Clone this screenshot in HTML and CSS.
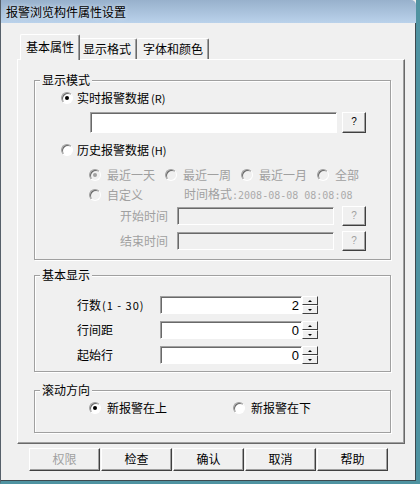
FILE: index.html
```html
<!DOCTYPE html>
<html lang="zh-CN">
<head>
<meta charset="utf-8">
<title>报警浏览构件属性设置</title>
<link rel="stylesheet" href="styles.css">
</head>
<body>
<div class="window">
  <div class="titlebar">报警浏览构件属性设置</div>
  <div class="client">
    <div class="tabs">
      <div class="tab active">基本属性</div>
      <div class="tab t2">显示格式</div>
      <div class="tab t3">字体和颜色</div>
    </div>
    <div class="panel">
      <div class="group g1">
        <div class="legend">显示模式</div>
        <div class="row r1"><span class="radio checked"></span><span class="lbl">实时报警数据<span class="acc">(R)</span></span></div>
        <div class="row r2"><div class="input w-main"></div><div class="qbtn">?</div></div>
        <div class="row r3"><span class="radio"></span><span class="lbl">历史报警数据<span class="acc">(H)</span></span></div>
        <div class="row r4 disabled">
          <span class="opt"><span class="radio checked"></span><span class="lbl">最近一天</span></span>
          <span class="opt o2"><span class="radio"></span><span class="lbl">最近一周</span></span>
          <span class="opt o3"><span class="radio"></span><span class="lbl">最近一月</span></span>
          <span class="opt o4"><span class="radio"></span><span class="lbl">全部</span></span>
        </div>
        <div class="row r5 disabled">
          <span class="opt"><span class="radio"></span><span class="lbl">自定义</span></span>
          <span class="fmt">时间格式<span class="mono">:2008-08-08 08:08:08</span></span>
        </div>
        <div class="row r6 disabled"><span class="tlabel">开始时间</span><div class="input w-time"></div><div class="qbtn q2">?</div></div>
        <div class="row r7 disabled"><span class="tlabel">结束时间</span><div class="input w-time"></div><div class="qbtn q2">?</div></div>
      </div>
      <div class="group g2">
        <div class="legend">基本显示</div>
        <div class="srow s1"><span class="slabel">行数<span class="range">(1 - 30)</span></span><div class="input w-spin">2</div><div class="spin"><span class="up"></span><span class="down"></span></div></div>
        <div class="srow"><span class="slabel">行间距</span><div class="input w-spin">0</div><div class="spin"><span class="up"></span><span class="down"></span></div></div>
        <div class="srow"><span class="slabel">起始行</span><div class="input w-spin">0</div><div class="spin"><span class="up"></span><span class="down"></span></div></div>
      </div>
      <div class="group g3">
        <div class="legend">滚动方向</div>
        <div class="row r8">
          <span class="opt"><span class="radio checked"></span><span class="lbl">新报警在上</span></span>
          <span class="opt o5"><span class="radio"></span><span class="lbl">新报警在下</span></span>
        </div>
      </div>
    </div>
    <div class="buttons">
      <div class="btn dis">权限</div>
      <div class="btn">检查</div>
      <div class="btn">确认</div>
      <div class="btn">取消</div>
      <div class="btn">帮助</div>
    </div>
  </div>
</div>
</body>
</html>
```
FILE: styles.css
```css
* { box-sizing: border-box; }
html, body { margin: 0; padding: 0; }
body {
  width: 420px;
  height: 484px;
  overflow: hidden;
  font-family: "Noto Sans CJK SC", "Noto Sans", sans-serif;
  font-size: 12px;
  color: #000;
  background: #f0f0f0;
}
.window {
  width: 420px;
  height: 484px;
  border-left: 1px solid #56606a;
  border-right: 4px solid #4f93a1;
  border-bottom: 3px solid #4f93a1;
  display: flex;
  flex-direction: column;
}
.titlebar {
  height: 23px;
  flex: none;
  background: linear-gradient(#98b1cc, #bad2eb);
  border-top-right-radius: 5px;
  padding-left: 5px;
  line-height: 24px;
  font-size: 12px;
  color: #000;
  text-shadow: 0 0 4px rgba(255,255,255,0.7);
}
.client {
  flex: 1;
  background: #f0f0f0;
  border-right: 1px solid #3e4a50;
  border-bottom: 1px solid #3e4a50;
  padding: 11px 0 0 16px;
}
.tabs {
  display: flex;
  align-items: flex-end;
  height: 25px;
  margin-left: 3px;
}
.tab {
  height: 21px;
  line-height: 19px;
  border-top: 1px solid #fff;
  border-left: 1px solid #fff;
  border-right: 1px solid #696969;
  box-shadow: inset -1px 0 0 #a0a0a0;
  border-top-left-radius: 2px;
  border-top-right-radius: 2px;
  padding-left: 4px;
  background: #f0f0f0;
}
.tab.active {
  height: 26px;
  margin-bottom: -1px;
  width: 60px;
  padding-left: 5px;
  line-height: 23px;
  position: relative;
  z-index: 1;
}
.tab.t2 { width: 58px; margin-left: -1px; border-left: none; padding-left: 4px; }
.tab.t3 { width: 72px; border-left: none; padding-left: 6px; }
.panel {
  width: 388px;
  height: 385px;
  border: 1px solid;
  border-color: #fff #696969 #696969 #fff;
  box-shadow: inset -1px -1px 0 #a0a0a0;
  padding: 20px 0 0 16px;
}
.group {
  width: 357px;
  border: 1px solid #a0a0a0;
  box-shadow: 1px 1px 0 #fff, inset 1px 1px 0 #fff;
}
.g1 { height: 180px; }
.g2 { height: 97px; margin-top: 15px; }
.g3 { height: 43px; margin-top: 18px; }
.legend {
  margin: -8px 0 0 5px;
  padding: 0 2px;
  width: max-content;
  line-height: 14px;
  background: #f0f0f0;
}
.row {
  display: flex;
  align-items: center;
  height: 16px;
  line-height: 16px;
}
.acc { margin-left: 2px; font-size: 11px; }
.r1 { margin-top: 3px; padding-left: 26px; }
.r1 .lbl, .r3 .lbl { margin-left: 4px; }
.r2 { margin-top: 6px; height: 21px; padding-left: 55px; }
.r3 { margin-top: 9px; padding-left: 26px; }
.r4 { margin-top: 9px; padding-left: 54px; }
.r5 { margin-top: 4px; padding-left: 54px; }
.r6 { margin-top: 3px; height: 20px; }
.r7 { margin-top: 5px; height: 20px; }
.r8 { margin-top: 3px; padding-left: 54px; }
.opt { display: flex; align-items: center; }
.opt .lbl { margin-left: 6px; }
.o2 { margin-left: 10px; }
.o3 { margin-left: 10px; }
.o4 { margin-left: 10px; }
.o5 { margin-left: 66px; }
.fmt { margin-left: 41px; }
.mono { font-family: "DejaVu Sans Mono", "Liberation Mono", monospace; font-size: 10px; color: #aaa; }
.disabled { color: #a0a0a0; }
.radio {
  width: 12px;
  height: 12px;
  flex: none;
  border-radius: 50%;
  border: 1px solid;
  border-color: #a0a0a0 #fff #fff #a0a0a0;
  background: #fff;
  box-shadow: inset 1px 1px 0 #696969;
  position: relative;
}
.radio.checked::after {
  content: "";
  position: absolute;
  left: 3px;
  top: 3px;
  width: 4px;
  height: 4px;
  border-radius: 50%;
  background: #000;
}
.disabled .radio { background: #f0f0f0; }
.disabled .radio.checked::after { background: #a0a0a0; }
.input {
  border: 1px solid;
  border-color: #a0a0a0 #fff #fff #a0a0a0;
  box-shadow: inset 1px 1px 0 #696969;
  background: #fff;
}
.w-main { width: 247px; height: 21px; }
.w-time { width: 157px; height: 18px; margin-left: 9px; background: #f0f0f0; }
.tlabel { width: 133px; text-align: right; }
.qbtn {
  width: 24px;
  height: 21px;
  margin-left: 5px;
  border: 1px solid;
  border-color: #fff #404040 #404040 #fff;
  box-shadow: inset -1px -1px 0 #a0a0a0;
  background: #f0f0f0;
  text-align: center;
  line-height: 18px;
  font-size: 10px;
  font-family: "Liberation Sans", sans-serif;
}
.qbtn.q2 { height: 20px; margin-left: 8px; color: #a0a0a0; }
.srow {
  display: flex;
  align-items: center;
  height: 18px;
  margin-top: 7px;
  padding-left: 42px;
}
.srow.s1 { margin-top: 14px; }
.slabel { width: 83px; line-height: 16px; }
.range { margin-left: 1px; letter-spacing: 1px; font-size: 11px; }
.w-spin {
  width: 142px;
  height: 18px;
  text-align: right;
  padding-right: 2px;
  line-height: 17px;
  font-family: "Liberation Sans", sans-serif;
  font-size: 13px;
}
.spin {
  width: 16px;
  height: 18px;
  display: flex;
  flex-direction: column;
}
.spin span {
  flex: 1;
  border: 1px solid;
  border-color: #fff #404040 #404040 #fff;
  background: #f0f0f0;
  display: flex;
  align-items: center;
  justify-content: center;
}
.spin .up::before {
  content: "";
  border-left: 2px solid transparent;
  border-right: 2px solid transparent;
  border-bottom: 2px solid #000;
}
.spin .down::before {
  content: "";
  border-left: 2px solid transparent;
  border-right: 2px solid transparent;
  border-top: 2px solid #000;
}
.buttons {
  display: flex;
  gap: 1px;
  margin: 4px 0 0 12px;
}
.btn {
  width: 71px;
  height: 23px;
  border: 1px solid;
  border-color: #fff #404040 #404040 #fff;
  box-shadow: inset -1px -1px 0 #a0a0a0;
  background: #f0f0f0;
  text-align: center;
  line-height: 20px;
}
.btn.dis { color: #a0a0a0; }
```
